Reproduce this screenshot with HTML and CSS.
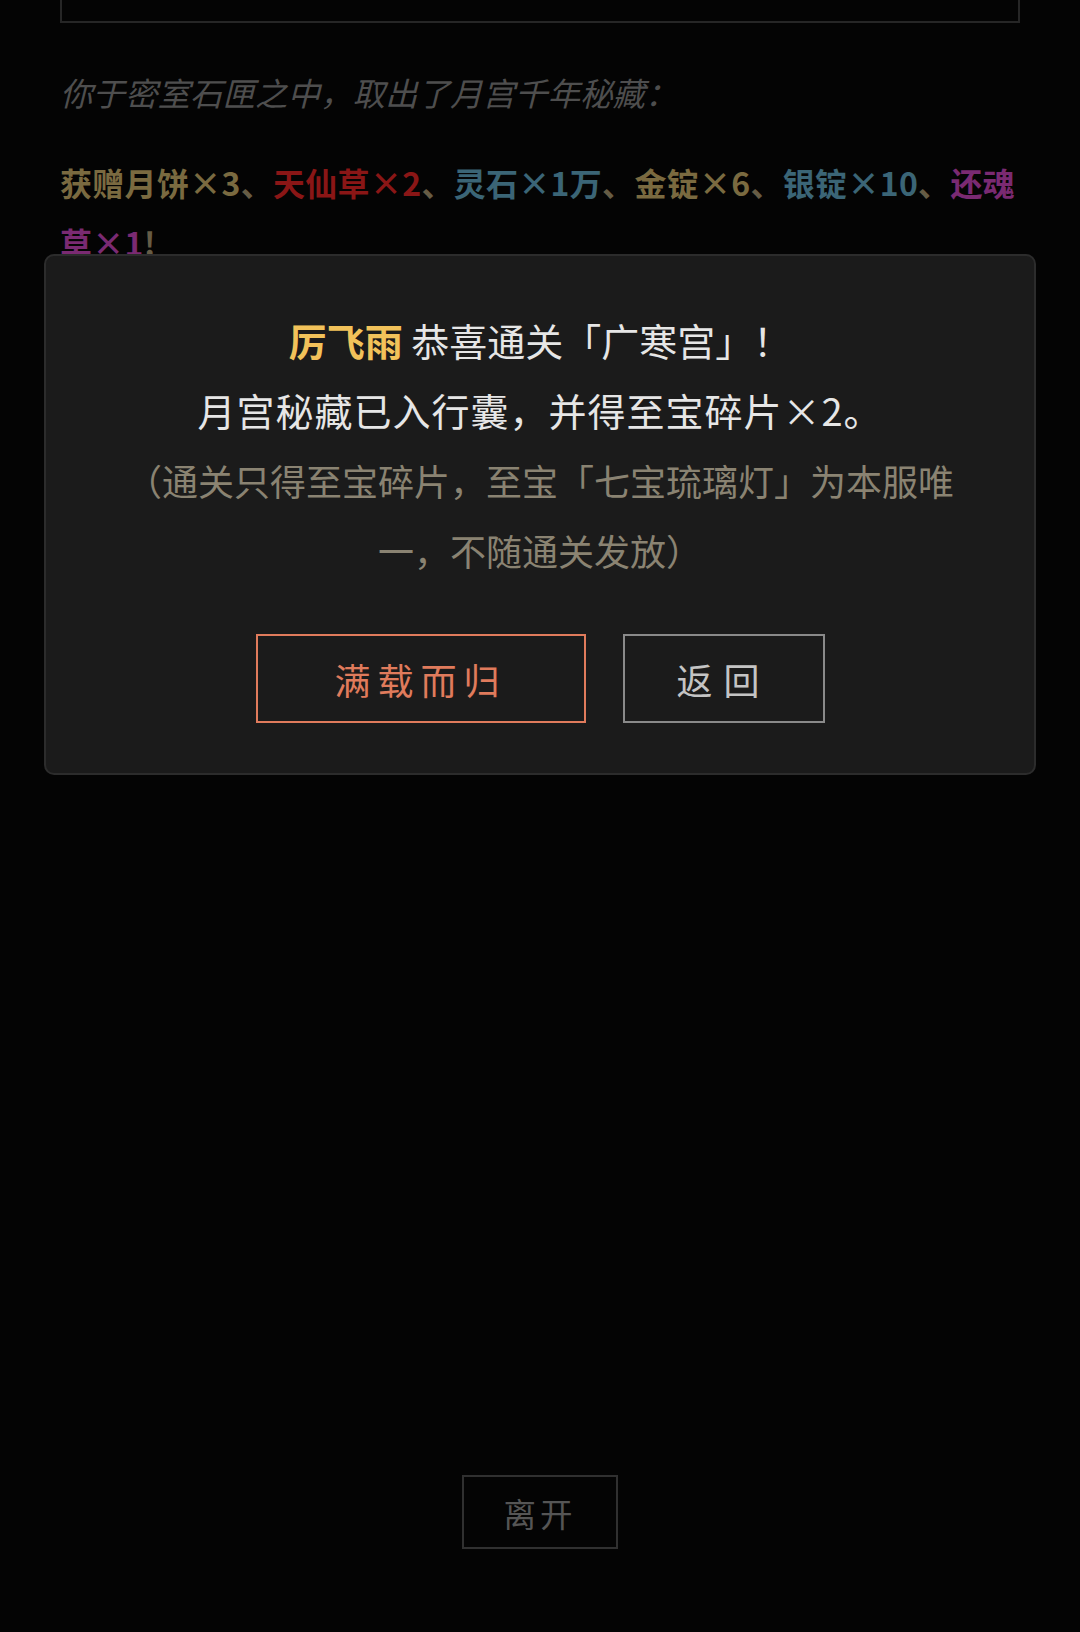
FILE: index.html
```html
<!DOCTYPE html>
<html lang="zh-CN">
<head>
<meta charset="utf-8">
<title>广寒宫</title>
<link rel="stylesheet" href="styles.css">
</head>
<body>
<div class="page">
  <main class="scroll">
    <div class="chest"></div>
    <p class="narration">你于密室石匣之中，取出了月宫千年秘藏：</p>
    <p class="loot"><span class="c-gold">获赠月饼×3</span>、<span class="c-red">天仙草×2</span>、<span class="c-teal">灵石×1万</span>、<span class="c-gold">金锭×6</span>、<span class="c-teal">银锭×10</span>、<span class="c-purple">还魂草×1</span>!</p>
  </main>
  <footer class="footer">
    <button class="leave" type="button">离开</button>
  </footer>

  <div class="modal">
    <p class="congrats"><span class="name">厉飞雨</span> 恭喜通关「广寒宫」！</p>
    <p class="congrats congrats-wide">月宫秘藏已入行囊，并得至宝碎片×2。</p>
    <p class="note">（通关只得至宝碎片，至宝「七宝琉璃灯」为本服唯一，不随通关发放）</p>
    <div class="actions">
      <button class="btn btn-primary" type="button">满载而归</button>
      <button class="btn btn-secondary" type="button">返回</button>
    </div>
  </div>
</div>
</body>
</html>
```

FILE: styles.css
```css
html, body {
  margin: 0;
  padding: 0;
  background: #040404;
}

body {
  font-family: "Noto Sans CJK SC", "Noto Sans", sans-serif;
}

.page {
  position: relative;
  min-height: 1632px;
  display: flex;
  flex-direction: column;
}

.scroll {
  flex: 1;
  padding: 0 60px;
}

.chest {
  height: 21px;
  border: 2px solid #262626;
  border-top: none;
}

.narration {
  margin: 39px 0 0;
  font-size: 32.5px;
  line-height: 60px;
  font-style: italic;
  color: #4e4e4e;
}

.loot {
  margin: 30px 0 0;
  font-size: 32px;
  line-height: 60px;
  letter-spacing: 0.3px;
  font-weight: bold;
  color: #665c45;
}

.c-gold { color: #7a6a40; }
.c-red { color: #8a1616; }
.c-teal { color: #3b6576; }
.c-purple { color: #7a2a72; }

.footer {
  display: flex;
  justify-content: center;
  padding-bottom: 83px;
}

.leave {
  box-sizing: border-box;
  width: 156px;
  height: 74px;
  border: 2px solid #303030;
  background: transparent;
  color: #555555;
  font-family: inherit;
  font-size: 32.5px;
  letter-spacing: 4px;
  padding: 0;
}

.modal {
  position: absolute;
  top: 254px;
  left: 44px;
  right: 44px;
  box-sizing: border-box;
  background: #1b1b1b;
  border: 2px solid #2c2c2c;
  border-radius: 10px;
  padding: 49px 72px 50px;
  text-align: center;
}

.congrats {
  margin: 0;
  font-size: 38px;
  line-height: 70px;
  color: #e6e6e6;
}

.congrats-wide {
  letter-spacing: 1px;
}

.congrats .name {
  color: #f2c25a;
  font-weight: bold;
}

.note {
  margin: 0;
  font-size: 36px;
  line-height: 70px;
  color: #8a8372;
}

.actions {
  display: flex;
  justify-content: center;
  gap: 37px;
  margin-top: 49px;
}

.btn {
  box-sizing: border-box;
  height: 89px;
  background: transparent;
  font-family: inherit;
  font-size: 36px;
  padding: 0;
}

.btn-primary {
  width: 330px;
  border: 2px solid #e07b5c;
  color: #e07b5c;
  letter-spacing: 7px;
}

.btn-secondary {
  width: 202px;
  border: 2px solid #8a8a8a;
  color: #c4c4c4;
  letter-spacing: 11px;
}
```
